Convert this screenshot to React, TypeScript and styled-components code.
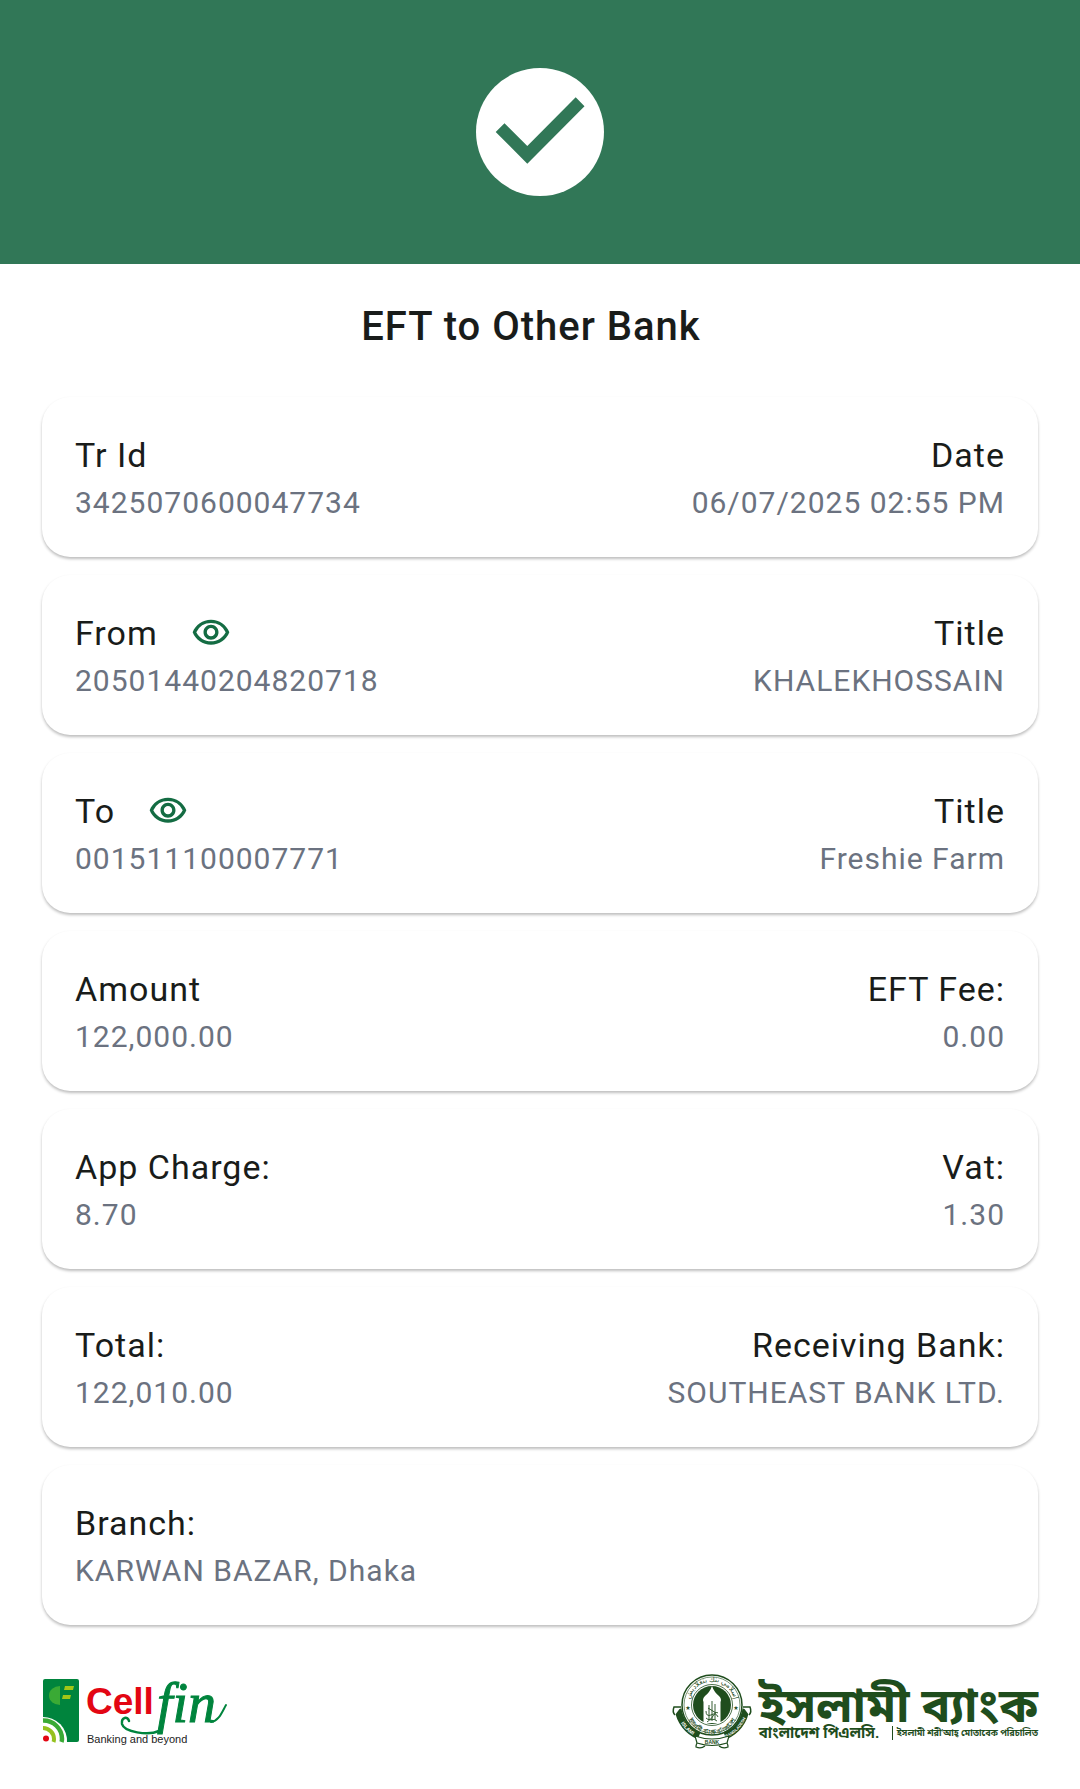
import React from "react";
import styled, { createGlobalStyle } from "styled-components";
import { MdOutlineVisibility } from "react-icons/md";

const GlobalStyle = createGlobalStyle`
  * { box-sizing: border-box; }
  body { margin: 0; background: #ffffff; font-family: Roboto, "Noto Sans", sans-serif; color: #191c1a; }
`;

const Header = styled.header`
  display: flex;
  align-items: center;
  justify-content: center;
  height: 264px;
  background: #317757;
`;

const CheckMark = styled.svg`
  width: 128px;
  height: 128px;
`;

const Title = styled.h1`
  margin: 0;
  padding: 39px 18px 0 0;
  font-size: 40px;
  line-height: 48px;
  font-weight: 500;
  letter-spacing: 1px;
  text-align: center;
`;

const Details = styled.dl`
  display: flex;
  flex-direction: column;
  gap: 18px;
  margin: 0;
  padding: 46px 42px 0;
`;

const Card = styled.div`
  display: flex;
  justify-content: space-between;
  padding: 34px 33px 31px;
  border-radius: 28px;
  background: #ffffff;
  box-shadow: 0 2px 3px rgba(0, 0, 0, 0.26);
`;

const Field = styled.div<{ $end?: boolean }>`
  display: flex;
  flex-direction: column;
  align-items: ${(p) => (p.$end ? "flex-end" : "flex-start")};
  letter-spacing: 1px;
`;

const Label = styled.dt`
  display: flex;
  align-items: center;
  gap: 33px;
  font-size: 34px;
  line-height: 48px;
`;

const Value = styled.dd`
  margin: 0;
  font-size: 30px;
  line-height: 47px;
  color: #6b7280;
`;

const EyeButton = styled.button`
  display: flex;
  padding: 0;
  border: 0;
  background: none;
  color: #146c43;
  font-size: 40px;
`;

const Footer = styled.footer`
  display: flex;
  align-items: center;
  justify-content: space-between;
  padding: 49px 42px 39px;
`;

const CellfinSvg = styled.svg`
  width: 190px;
  height: 76px;
`;

const Bank = styled.div`
  display: flex;
  align-items: center;
  gap: 6px;
  color: #1f4d1d;
  font-family: Roboto, "Noto Sans Bengali", sans-serif;
`;

const EmblemSvg = styled.svg`
  width: 82px;
  height: 76px;
`;

const BankText = styled.div`
  display: flex;
  flex-direction: column;
  padding-top: 4px;
`;

const BankName = styled.span`
  font-size: 48px;
  line-height: 38px;
  font-weight: 700;
  white-space: nowrap;
`;

const BankLine = styled.div`
  display: flex;
  align-items: center;
  justify-content: space-between;
  gap: 6px;
  line-height: 16px;
  white-space: nowrap;
`;

const BankLegal = styled.span`
  font-size: 15px;
  font-weight: 700;
`;

const BankMotto = styled.span`
  padding-left: 4px;
  border-left: 1px solid currentColor;
  font-size: 9px;
  line-height: 14px;
  font-weight: 700;
`;

function CellfinLogo() {
  return (
    <CellfinSvg viewBox="0 0 190 76" role="img" aria-label="Cellfin, Banking and beyond">
      <rect x="1" y="5" width="36" height="63" rx="2" fill="#00843d" />
      <path d="M18 12 A11 9.500 0 0 0 18 31 Z" fill="#3aaa35" />
      <path d="M23 12 h9 l-1 4 h-9 z M21 21 h8 l-1 4 h-8 z" fill="#a2c617" />
      <path d="M0 43 A24 24 0 0 1 25 69 H0 Z" fill="#fff" />
      <path d="M1 46.500 A18.500 18.500 0 0 1 20 65 q0 1.500 -.5 3" fill="none" stroke="#3aaa35" strokeWidth="4.500" />
      <path d="M1 54 A11 11 0 0 1 12 65 q0 1.500 -.5 3" fill="none" stroke="#95c11f" strokeWidth="4" />
      <circle cx="4" cy="64.500" r="3" fill="#e30613" />
      <text x="44" y="40" fontFamily="Liberation Sans, sans-serif" fontWeight="700" fontSize="37" fill="#e30613">Cell</text>
      <text x="45" y="69" fontFamily="Liberation Sans, sans-serif" fontSize="11" fill="#222">Banking and beyond</text>
      <text
        x="115"
        y="48"
        fontFamily="Liberation Serif, serif"
        fontStyle="italic"
        fontSize="56"
        fill="#00843d"
        stroke="#00843d"
        strokeWidth="1"
        style={{ fontVariantLigatures: "none" }}
      >
        fin
      </text>
      <path d="M117 57 C106 62 82 58 80 50 C79 43 86 42 87 47" fill="none" stroke="#00843d" strokeWidth="2.500" strokeLinecap="round" />
      <path d="M169 48 C177 47 180 38 184 31" fill="none" stroke="#00843d" strokeWidth="2" strokeLinecap="round" />
    </CellfinSvg>
  );
}

function BankEmblem() {
  return (
    <EmblemSvg viewBox="0 0 82 76" role="img" aria-label="Islami Bank Bangladesh emblem">
      <defs>
        <path id="ring-top" d="M18.500 30 A22.500 22.500 0 0 1 63.500 30" />
        <path id="ring-bottom" d="M14 33 A27 27 0 0 0 68 33" />
        <path id="ribbon-left" d="M6 40 A36 36 0 0 0 31 65" />
        <path id="ribbon-right" d="M51 65 A36 36 0 0 0 76 40" />
      </defs>
      <g fill="none" stroke="#1f4d1d">
        <path d="M7 35 A34.500 34.500 0 0 0 28 62" strokeWidth="7" />
        <path d="M75 35 A34.500 34.500 0 0 1 54 62" strokeWidth="7" />
        <path d="M10 33 H3 q-2 5 1 8 M72 33 h7 q2 5 -1 8" strokeWidth="1.500" fill="#fff" />
        <circle cx="41" cy="31" r="30" strokeWidth="1.500" fill="#fff" />
        <circle cx="41" cy="31" r="28" strokeWidth=".6" />
        <circle cx="41" cy="31" r="20.500" strokeWidth=".8" />
      </g>
      <circle cx="41" cy="31" r="19" fill="#1f4d1d" />
      <path d="M41 12 Q43 18 48 22 Q51 25 49.500 28 V49 H32.500 V28 Q31 25 34 22 Q39 18 41 12 Z" fill="#fff" />
      <path
        d="M41 27 v20 M38 31 v15 M44 30 v16 M35 37 q0 6 5 4 q5 -3 7 2 M35 44 q4 4 7 -2 q3 -5 5 -3 M37 34 l8 5 M36 48 q5 -5 10 -1"
        fill="none"
        stroke="#1f4d1d"
        strokeWidth=".9"
      />
      <g fill="#1f4d1d" fontFamily="Noto Sans, DejaVu Sans, sans-serif">
        <text fontSize="7" textAnchor="middle">
          <textPath href="#ring-top" startOffset="50%">إسلامي بنك بنغلاديش</textPath>
        </text>
        <text fontSize="6" fontWeight="700" textAnchor="middle">
          <textPath href="#ring-bottom" startOffset="50%">ইসলামী ব্যাংক বাংলাদেশ</textPath>
        </text>
        <text x="17" y="36" fontSize="6" textAnchor="middle">★</text>
        <text x="65" y="36" fontSize="6" textAnchor="middle">★</text>
      </g>
      <g fill="#fff" fontFamily="Liberation Sans, sans-serif" fontWeight="700" textAnchor="middle">
        <text fontSize="5"><textPath href="#ribbon-left" startOffset="50%">ISLAMI</textPath></text>
        <text fontSize="4"><textPath href="#ribbon-right" startOffset="50%">BANGLADESH</textPath></text>
      </g>
      <path d="M30 66 q-5 2 -5 7 q5 2 9 -1 M52 66 q5 2 5 7 q-5 2 -9 -1" fill="#fff" stroke="#1f4d1d" strokeWidth="1.200" />
      <path d="M24 62 Q41 68 58 62 L56 69 Q41 74 26 69 Z" fill="#fff" stroke="#1f4d1d" strokeWidth="1.200" />
      <text x="41" y="70" fontFamily="Liberation Sans, sans-serif" fontWeight="700" fontSize="5" textAnchor="middle" fill="#1f4d1d">BANK</text>
    </EmblemSvg>
  );
}

type FieldData = { label: string; value: string; eye?: boolean };

const rows: FieldData[][] = [
  [{ label: "Tr Id", value: "3425070600047734" }, { label: "Date", value: "06/07/2025 02:55 PM" }],
  [{ label: "From", value: "20501440204820718", eye: true }, { label: "Title", value: "KHALEKHOSSAIN" }],
  [{ label: "To", value: "001511100007771", eye: true }, { label: "Title", value: "Freshie Farm" }],
  [{ label: "Amount", value: "122,000.00" }, { label: "EFT Fee:", value: "0.00" }],
  [{ label: "App Charge:", value: "8.70" }, { label: "Vat:", value: "1.30" }],
  [{ label: "Total:", value: "122,010.00" }, { label: "Receiving Bank:", value: "SOUTHEAST BANK LTD." }],
  [{ label: "Branch:", value: "KARWAN BAZAR, Dhaka" }],
];

export default function App() {
  return (
    <>
      <GlobalStyle />
      <Header>
        <CheckMark viewBox="0 0 128 128" role="img" aria-label="Success">
          <circle cx="64" cy="64" r="64" fill="#fff" />
          <path d="M19.700 64 L28.500 55.300 L51.300 78 L99.700 29.300 L108.500 38.200 L51.300 95.700 Z" fill="#317757" />
        </CheckMark>
      </Header>
      <main>
        <Title>EFT to Other Bank</Title>
        <Details>
          {rows.map((row, i) => (
            <Card key={i}>
              {row.map((field, j) => (
                <Field key={j} $end={j === 1}>
                  <Label>
                    {field.label}
                    {field.eye && (
                      <EyeButton type="button" aria-label={`Show ${field.label} account`}>
                        <MdOutlineVisibility />
                      </EyeButton>
                    )}
                  </Label>
                  <Value>{field.value}</Value>
                </Field>
              ))}
            </Card>
          ))}
        </Details>
      </main>
      <Footer>
        <CellfinLogo />
        <Bank>
          <BankEmblem />
          <BankText>
            <BankName>ইসলামী ব্যাংক</BankName>
            <BankLine>
              <BankLegal>বাংলাদেশ পিএলসি.</BankLegal>
              <BankMotto>ইসলামী শরী'আহ্ মোতাবেক পরিচালিত</BankMotto>
            </BankLine>
          </BankText>
        </Bank>
      </Footer>
    </>
  );
}
